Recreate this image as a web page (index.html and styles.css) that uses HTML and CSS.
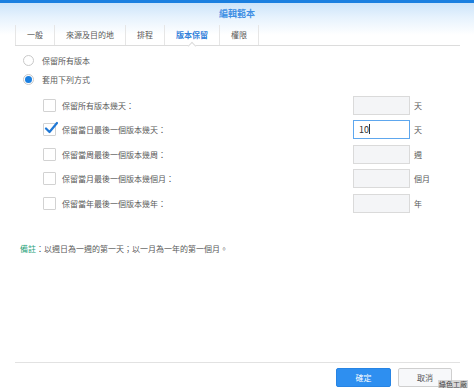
FILE: index.html
```html
<!DOCTYPE html>
<html lang="zh-Hant">
<head>
  <meta charset="UTF-8">
  <title>編輯範本</title>
  <link rel="stylesheet" href="styles.css">
</head>
<body>
  <div class="dialog">
    <div class="title">編輯範本</div>

    <div class="tabs">
      <div class="tab">一般</div>
      <div class="tab">來源及目的地</div>
      <div class="tab">排程</div>
      <div class="tab active">版本保留</div>
      <div class="tab">權限</div>
    </div>

    <div class="content">
      <div class="radio-row">
        <span class="radio"></span>保留所有版本
      </div>
      <div class="radio-row">
        <span class="radio on"></span>套用下列方式
      </div>

      <div class="rules">
        <div class="rule">
          <span class="check"></span>
          <span class="label">保留所有版本幾天：</span>
          <span class="box"></span>
          <span class="unit">天</span>
        </div>
        <div class="rule">
          <span class="check on">
            <svg viewBox="0 0 14 14" width="14" height="14"><path d="M2 7.5 L5.5 11 L13 2" fill="none" stroke="#1f78d6" stroke-width="2.2" stroke-linecap="round" stroke-linejoin="round"/></svg>
          </span>
          <span class="label">保留當日最後一個版本幾天：</span>
          <span class="box focus">10<i class="caret"></i></span>
          <span class="unit">天</span>
        </div>
        <div class="rule">
          <span class="check"></span>
          <span class="label">保留當周最後一個版本幾周：</span>
          <span class="box"></span>
          <span class="unit">週</span>
        </div>
        <div class="rule">
          <span class="check"></span>
          <span class="label">保留當月最後一個版本幾個月：</span>
          <span class="box"></span>
          <span class="unit">個月</span>
        </div>
        <div class="rule">
          <span class="check"></span>
          <span class="label">保留當年最後一個版本幾年：</span>
          <span class="box"></span>
          <span class="unit">年</span>
        </div>
      </div>

      <p class="note"><b>備註</b>：以週日為一週的第一天；以一月為一年的第一個月。</p>
    </div>

    <div class="footer">
      <button class="btn primary">確定</button>
      <button class="btn">取消</button>
    </div>

    <div class="mark">綠色工廠</div>
  </div>
</body>
</html>
```

FILE: styles.css
```css
html,body{
  margin: 0;
  width: 474px;
  height: 392px;
  overflow: hidden;
}
.dialog{
  position: relative;
  width: 474px;
  height: 392px;
  box-sizing: border-box;
  border-top: 3px solid #1a7fe0;
  background: linear-gradient(#cce4fa 0, #e6f2fd 14px, #fff 32px);
  display: flex;
  flex-direction: column;
  font-family: "Noto Sans CJK TC", "Noto Sans", sans-serif;
  font-size: 8px;
  color: #595959;
}
.title{
  height: 22px;
  line-height: 22px;
  text-align: center;
  font-size: 9px;
  font-weight: bold;
  color: #3f8fe4;
}

/* tabs */
.tabs{
  display: flex;
  margin: 0 14px 0 15px;
  height: 20px;
  border-bottom: 1px solid #dcdcdc;
}
.tab{
  position: relative;
  padding: 0 11px;
  line-height: 20px;
  border-right: 1px solid #e6e6e6;
}
.tab:first-child{
  border-left: 1px solid #e6e6e6;
}
.tab.active{
  color: #2f80da;
  font-weight: bold;
}
.tab.active::after{
  content: "";
  position: absolute;
  left: 50%;
  bottom: -4px;
  width: 5px;
  height: 5px;
  margin-left: -3px;
  background: #fff;
  border-left: 1px solid #dcdcdc;
  border-top: 1px solid #dcdcdc;
  transform: rotate(45deg);
}

/* content */
.content{
  flex: 1;
}
.radio-row{
  display: flex;
  align-items: center;
  height: 19px;
  padding-left: 23px;
}
.radio-row:first-child{
  margin-top: 5px;
}
.radio{
  width: 9px;
  height: 9px;
  border: 1px solid #c9c9c9;
  border-radius: 50%;
  margin-right: 8px;
  background: #fff;
  display: flex;
  justify-content: center;
  align-items: center;
}
.radio.on::after{
  content: "";
  width: 7px;
  height: 7px;
  border-radius: 50%;
  background: #1a7fe0;
}

.rules{
  margin-top: 4px;
}
.rule{
  display: flex;
  align-items: center;
  height: 24.5px;
  padding-left: 43px;
}
.check{
  position: relative;
  width: 11px;
  height: 11px;
  border: 1px solid #d2d2d2;
  border-radius: 1px;
  background: #fff;
  margin-right: 6px;
}
.check svg{
  position: absolute;
  left: 0;
  top: -3px;
}
.label{
  width: 291px;
}
.box{
  width: 55px;
  height: 17px;
  border: 1px solid #dadada;
  background: #f4f5f7;
  line-height: 17px;
  padding: 0;
  box-sizing: content-box;
}
.box.focus{
  width: 50px;
  padding-left: 5px;
  background: #fff;
  border-color: #5ea7ee;
  color: #333;
  font-size: 9px;
}
.caret{
  display: inline-block;
  width: 1px;
  height: 10px;
  background: #333;
  vertical-align: -1px;
}
.unit{
  margin-left: 4px;
}

.note{
  margin: 26px 0 0 20px;
  line-height: 14px;
}
.note b{
  font-weight: normal;
  color: #2aa27c;
}

/* footer */
.footer{
  margin: 0 14px 0 15px;
  height: 30px;
  border-top: 1px solid #e2e2e2;
  display: flex;
  justify-content: flex-end;
  align-items: flex-start;
  gap: 7px;
  padding-right: 8px;
  padding-top: 5px;
  box-sizing: border-box;
}
.btn{
  width: 54px;
  height: 19px;
  padding: 0;
  font-family: inherit;
  font-size: 8px;
  color: #555;
  background: #f7f8fa;
  border: 1px solid #cfcfcf;
  border-radius: 2px;
}
.btn.primary{
  width: 55px;
  background: #2e8ff0;
  border-color: #2784e4;
  color: #fff;
}
.mark{
  position: absolute;
  right: 6px;
  bottom: 4px;
  font-size: 7px;
  line-height: 8px;
  color: #444;
  background: rgba(190,190,190,.6);
  padding: 0 1px;
}
```
